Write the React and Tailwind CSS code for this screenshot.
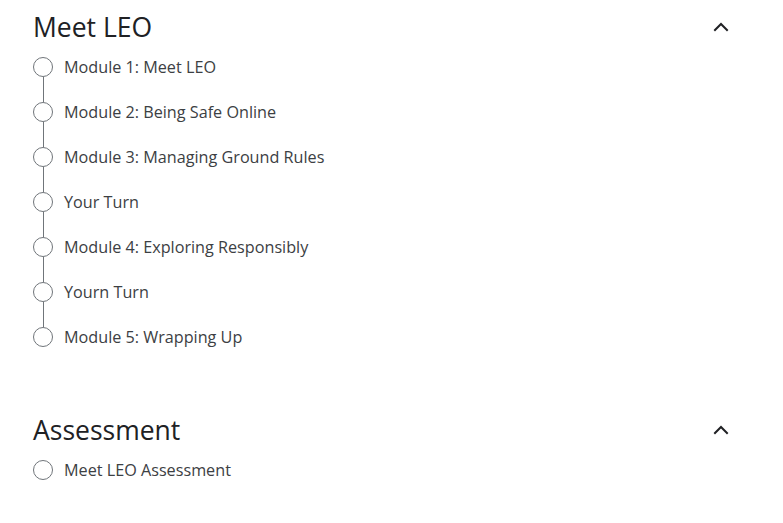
import React from "react";

const sections = [
  {
    title: "Meet LEO",
    items: [
      "Module 1: Meet LEO",
      "Module 2: Being Safe Online",
      "Module 3: Managing Ground Rules",
      "Your Turn",
      "Module 4: Exploring Responsibly",
      "Yourn Turn",
      "Module 5: Wrapping Up",
    ],
  },
  {
    title: "Assessment",
    items: ["Meet LEO Assessment"],
  },
];

function Chevron() {
  return (
    <svg width="24" height="24" viewBox="0 0 24 24" fill="none">
      <path d="M6 15l6-6 6 6" stroke="#202124" strokeWidth="2" strokeLinecap="square" />
    </svg>
  );
}

function Step({ label, last }) {
  return (
    <li className={`flex items-start gap-[11px] ${last ? "h-5" : "h-[45px]"}`}>
      <div className="flex h-full w-5 flex-col items-center">
        <span className="h-5 w-5 shrink-0 rounded-full border border-[#70757a] bg-white" />
        {!last && <span className="w-px flex-1 bg-[#70757a]" />}
      </div>
      <span className="text-[16.2px] leading-5 text-[#3c4043]">{label}</span>
    </li>
  );
}

export default function App() {
  return (
    <div className="min-h-screen bg-white px-[33px] pt-[10px] font-['Open_Sans','Roboto',sans-serif]">
      {sections.map((s, i) => (
        <section key={s.title} className={i > 0 ? "mt-[66px]" : ""}>
          <div className="flex h-[34px] items-center justify-between">
            <h2 className="text-[26.5px] leading-[34px] text-[#202124]">{s.title}</h2>
            <span className="mr-[17px]">
              <Chevron />
            </span>
          </div>
          <ul className="mt-[13px]">
            {s.items.map((it, j) => (
              <Step key={it} label={it} last={j === s.items.length - 1} />
            ))}
          </ul>
        </section>
      ))}
    </div>
  );
}
